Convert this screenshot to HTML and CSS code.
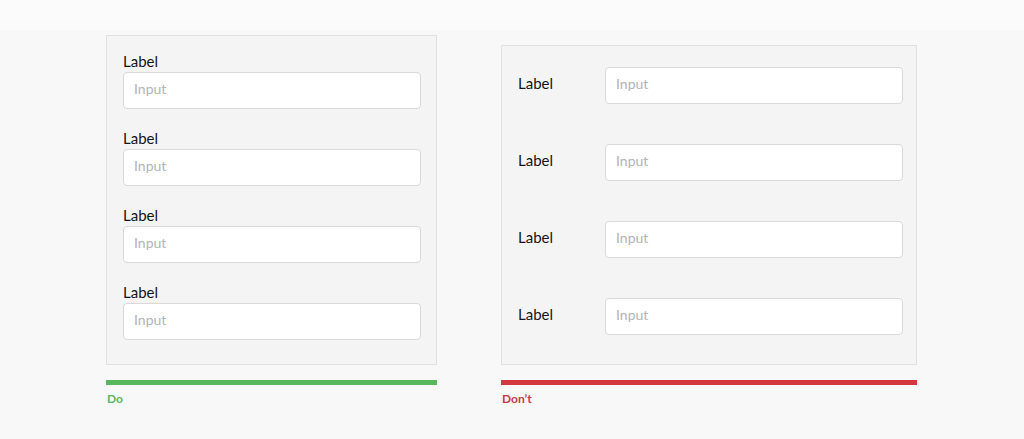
FILE: index.html
```html
<!DOCTYPE html>
<html>
<head>
<meta charset="utf-8">
<link rel="stylesheet" href="styles.css">
</head>
<body>
<div class="topband"></div>
<main class="compare">
  <section class="panel panel-do">
    <div class="field"><label class="label">Label</label><div class="input">Input</div></div>
    <div class="field"><label class="label">Label</label><div class="input">Input</div></div>
    <div class="field"><label class="label">Label</label><div class="input">Input</div></div>
    <div class="field"><label class="label">Label</label><div class="input">Input</div></div>
  </section>
  <section class="panel panel-dont">
    <div class="row"><label class="label">Label</label><div class="input">Input</div></div>
    <div class="row"><label class="label">Label</label><div class="input">Input</div></div>
    <div class="row"><label class="label">Label</label><div class="input">Input</div></div>
    <div class="row"><label class="label">Label</label><div class="input">Input</div></div>
  </section>
  <div class="bar bar-do"></div>
  <div class="bar bar-dont"></div>
  <div class="caption caption-do">Do</div>
  <div class="caption caption-dont">Don’t</div>
</main>
</body>
</html>
```
FILE: styles.css
```css
html, body {
  margin: 0;
  padding: 0;
}
body {
  background: #f8f8f8;
  font-family: Lato, "Open Sans", sans-serif;
  width: 1024px;
  height: 439px;
  overflow: hidden;
}
.topband {
  height: 30px;
  background: #fbfbfb;
}
.compare {
  display: grid;
  grid-template-columns: 331px 416px;
  column-gap: 64px;
  padding: 5px 0 0 106px;
  align-items: end;
}
.panel {
  box-sizing: border-box;
  background: #f4f4f4;
  border: 1px solid #e1e1e1;
  display: flex;
  flex-direction: column;
}
.panel-do {
  height: 330px;
  padding: 15px 15px 24px 16px;
  gap: 19px;
}
.panel-dont {
  height: 320px;
  padding: 21px 13px 29px 16px;
  gap: 40px;
}
.field {
  display: flex;
  flex-direction: column;
  gap: 3px;
}
.field .label {
  padding-top: 1px;
  margin-bottom: -1px;
}
.row {
  display: flex;
  align-items: flex-start;
}
.row .label {
  width: 87px;
  flex: none;
  padding-top: 7px;
}
.row .input {
  flex: 1;
}
.label {
  font-size: 15px;
  line-height: 18px;
  color: #141414;
}
.input {
  box-sizing: border-box;
  height: 37px;
  background: #fff;
  border: 1px solid #d9d9d9;
  border-radius: 4px;
  padding: 0 10px 3px;
  font-size: 14px;
  line-height: 32px;
  color: #b3b3b3;
}
.bar {
  height: 5px;
  margin-top: 15px;
}
.bar-do { background: #58b65e; }
.bar-dont { background: #d4393f; }
.caption {
  margin-top: 6px;
  font-size: 12px;
  line-height: 16px;
  font-weight: 700;
  padding-left: 1px;
}
.caption-do { color: #58b65e; }
.caption-dont { color: #c23d43; padding-left: 1px; }
```
